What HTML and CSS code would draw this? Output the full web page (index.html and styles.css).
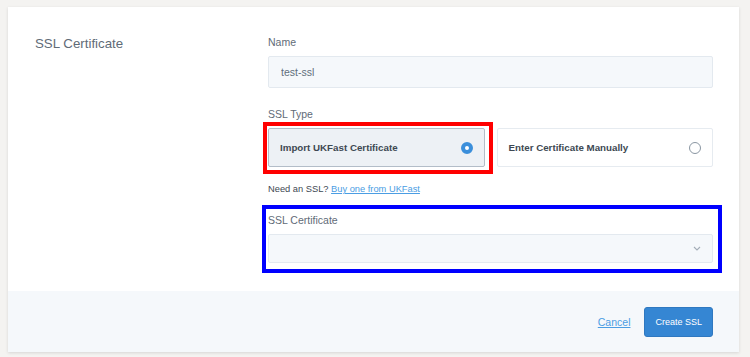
FILE: index.html
```html
<!DOCTYPE html>
<html lang="en">
<head>
    <meta charset="UTF-8">
    <meta name="viewport" content="width=device-width, initial-scale=1.0">
    <title>Create SSL</title>
    <link rel="stylesheet" href="styles.css">
</head>
<body>
    <div class="card">
        <div class="card-body">
            <h2 class="section-title">SSL Certificate</h2>
            <div class="fields">
                <div class="field">
                    <label for="name">Name</label>
                    <input type="text" id="name" name="name" value="test-ssl">
                </div>
                <div class="field field-type">
                    <label>SSL Type</label>
                    <div class="options">
                        <div class="option selected mark-red">
                            <span>Import UKFast Certificate</span>
                            <span class="radio"></span>
                        </div>
                        <div class="option">
                            <span>Enter Certificate Manually</span>
                            <span class="radio"></span>
                        </div>
                    </div>
                    <p class="hint">Need an SSL? <a href="#">Buy one from UKFast</a></p>
                </div>
                <div class="field field-cert mark-blue">
                    <label for="certificate">SSL Certificate</label>
                    <div class="select">
                        <svg width="8" height="5" viewBox="0 0 8 5"><path d="M1 1l3 3 3-3" fill="none" stroke="#a3adb8" stroke-width="1.1"/></svg>
                    </div>
                </div>
            </div>
        </div>
        <div class="card-footer">
            <a href="#" class="cancel">Cancel</a>
            <button type="submit" class="btn">Create SSL</button>
        </div>
    </div>
</body>
</html>
```

FILE: styles.css
```css
body, html {
    margin: 0;
    padding: 0;
    background: #f4f3f1;
    font-family: "Liberation Sans", Arial, sans-serif;
}
body {
    padding: 7px 11px 5px 8px;
}
.card {
    background: #fff;
    box-shadow: 0 1px 3px rgba(0, 0, 0, 0.12);
}
.card-body {
    display: grid;
    grid-template-columns: 233px 1fr;
    padding: 28px 26px 28px 27px;
}
.section-title {
    margin: 0;
    font-size: 13.3px;
    line-height: 18px;
    font-weight: normal;
    color: #5f6b77;
}
.field label {
    display: block;
    font-size: 10.5px;
    line-height: 15px;
    color: #5f6b77;
    margin-bottom: 6px;
}
.field input {
    display: block;
    width: 100%;
    height: 32px;
    box-sizing: border-box;
    padding: 0 12px;
    border: 1px solid #e3e9ef;
    border-radius: 2px;
    background: #f5f8fb;
    font-family: inherit;
    font-size: 10.5px;
    color: #606f7b;
    margin-bottom: 19px;
}
.options {
    display: grid;
    grid-template-columns: 1fr 1fr;
    gap: 12px;
    margin-top: 2px;
}
.option {
    position: relative;
    display: flex;
    align-items: center;
    justify-content: space-between;
    height: 39px;
    box-sizing: border-box;
    padding: 0 11px;
    border: 1px solid #e6ebf0;
    border-radius: 2px;
    font-size: 9.75px;
    font-weight: bold;
    color: #3d4852;
}
.option.selected {
    background: #edf1f5;
    border-color: #b3bdc8;
}
.radio {
    width: 12px;
    height: 12px;
    box-sizing: border-box;
    border-radius: 50%;
    border: 1px solid #8a96a2;
    background: #fff;
}
.selected .radio {
    border: 4px solid #3b8fdb;
}
.hint {
    margin: 15px 0 17px;
    font-size: 9.3px;
    line-height: 14px;
    color: #3d4852;
}
.hint a, .cancel {
    color: #4b9de3;
}
.field-cert {
    position: relative;
}
.select {
    display: flex;
    align-items: center;
    justify-content: flex-end;
    height: 29px;
    box-sizing: border-box;
    padding: 0 11px;
    border: 1px solid #e3e9ef;
    border-radius: 2px;
    background: #f5f8fb;
}
/* review marks drawn over the form */
.mark-red::after, .mark-blue::after {
    content: "";
    position: absolute;
    box-sizing: border-box;
    pointer-events: none;
}
.mark-red::after {
    top: -7px;
    left: -6px;
    right: -9px;
    bottom: -8px;
    border: 4px solid #ff0000;
}
.mark-blue::after {
    top: -8px;
    left: -6px;
    right: -9px;
    bottom: -10px;
    border: 4px solid #0000ff;
}
.card-footer {
    display: flex;
    justify-content: flex-end;
    align-items: center;
    gap: 14px;
    height: 61px;
    box-sizing: border-box;
    padding: 0 26px;
    background: #f5f8fb;
}
.cancel {
    font-size: 10.5px;
}
.btn {
    height: 30px;
    padding: 0 10px;
    border: 1px solid #2f78c0;
    border-radius: 3px;
    background: #3586d3;
    color: #fff;
    font-family: inherit;
    font-size: 9px;
}
```
